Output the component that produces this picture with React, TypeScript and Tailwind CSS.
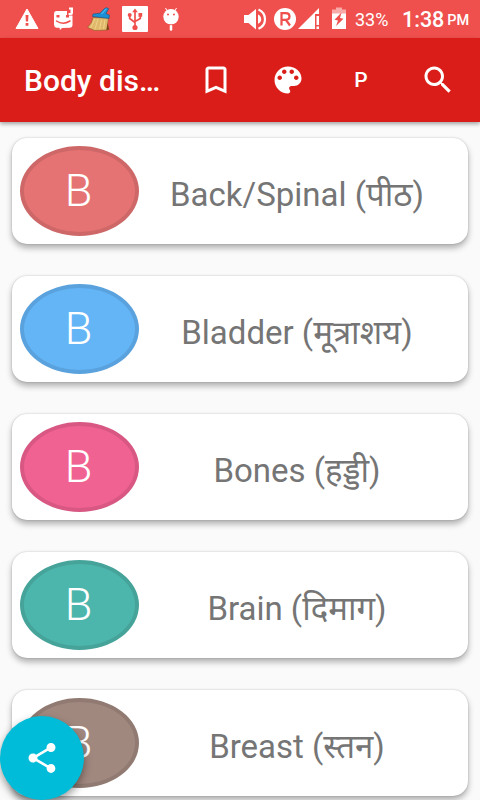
import type { ReactNode } from 'react';

const organs = [
  { name: 'Back/Spinal (पीठ)', fill: 'bg-[#e57373]', ring: 'border-[#ce6767]' },
  { name: 'Bladder (मूत्राशय)', fill: 'bg-[#64b5f6]', ring: 'border-[#5aa2dd]' },
  { name: 'Bones (हड्डी)', fill: 'bg-[#f06292]', ring: 'border-[#d85883]' },
  { name: 'Brain (दिमाग)', fill: 'bg-[#4db6ac]', ring: 'border-[#45a39a]' },
  { name: 'Breast (स्तन)', fill: 'bg-[#a1887f]', ring: 'border-[#907a72]' },
];

function Icon({ children }: { children: ReactNode }) {
  return (
    <svg viewBox="0 0 24 24" className="size-9 shrink-0" fill="currentColor">
      {children}
    </svg>
  );
}

function StatusBar() {
  return (
    <div className="flex h-[38px] items-center bg-[#ef504d] text-white">
      <svg width="240" height="38" viewBox="0 0 240 38" className="shrink-0">
        {/* warning */}
        <path fill="#fff" stroke="#fff" strokeWidth="1" strokeLinejoin="round" d="M27 9 38 28.500H16z" />
        <path fill="#ef504d" d="M25.500 15h3l-.4 6.500h-2.200zM25.600 23h2.800v2.700h-2.800z" />
        {/* chat face */}
        <path fill="#fff" d="M56.500 11H67v4.500h5.500V25.500q0 2-2.500 2.200L62 28l-2 2-.5-2.200-3-.1Q54 27 54 24.500V14q0-3 2.500-3z" />
        <path fill="#fff" d="M69 7.500h4v5.500q0 2-2 2h-2.500v-2h2v-3.500H69z" />
        <path fill="none" stroke="#ef504d" strokeWidth="1.500" strokeLinecap="round" d="M56.500 21q6.500 4.500 13.500 0" />
        <path fill="#ef504d" d="M56.500 15h3v2.500h-3zM66 15h3v2.500h-3z" />
        {/* broom */}
        <path fill="#dfb86c" stroke="#80571f" strokeWidth=".5" d="M93 17.500 108.500 18l-.7 4.500L107.500 30l-13 .5-7-3.200q4.500-3.500 5.500-9.800z" />
        <path fill="none" stroke="#f1d58c" strokeWidth=".9" d="m95 19-4.500 9M98 19l-3 10M101.500 19.500l-2 10M105 19.500l-1.500 9.500" />
        <path fill="#7b4419" d="m107.500 23 1.800 6.500-3 .8z" />
        <path fill="#1b8ed4" stroke="#17547f" strokeWidth=".6" d="m93 14 7-.8 4.500-4.700q2.200-1.500 4.200.2L106 13.500l3.500 1.700-.5 3.300-16.500-2z" />
        <path fill="none" stroke="#48b6ef" strokeWidth="1.200" d="m101.500 14 5-5.300" />
        {/* usb */}
        <rect x="122" y="6" width="26" height="26" rx="1" fill="#fff" />
        <path fill="none" stroke="#ef504d" strokeWidth="1.700" d="M135 11v16M129.700 15v3.500l5.300 4M140.300 15v3.500L135 21.500" />
        <path fill="#ef504d" d="m135 8.500 2.800 3.700h-5.600zM138.500 13h3.700v3.700h-3.700z" />
        <circle cx="129.700" cy="15" r="2" fill="#ef504d" />
        <circle cx="135" cy="27.500" r="2.600" fill="#ef504d" />
        {/* android head */}
        <path fill="none" stroke="#fff" strokeWidth="1" d="m165.500 8 2 3.500M176.500 8l-2 3.500" />
        <circle cx="171" cy="16.700" r="7.700" fill="#fff" />
        <path stroke="#fff" strokeWidth="2.500" strokeLinecap="round" d="M171 24v5.500" />
        <path stroke="#ef504d" strokeWidth=".9" d="M166 24.700h10" />
        <circle cx="168" cy="14.500" r="1" fill="#ef504d" />
        <circle cx="174" cy="14.500" r="1" fill="#ef504d" />
      </svg>
      <svg width="110" height="38" viewBox="240 0 110 38" className="shrink-0">
        {/* volume */}
        <path fill="#fff" d="M244 15h4.500l7.500-6v20.500l-7.500-6.500H244z" />
        <path fill="none" stroke="#fff" strokeWidth="2.200" d="M258.500 9.500q6.500 3 6.500 9.700t-6.500 9.600" />
        <path fill="#fff" d="M258 14.500q3.200 1.500 3.200 4.700t-3.200 4.600z" />
        {/* roaming and signal */}
        <circle cx="285" cy="19" r="11" fill="#fff" />
        <path fill="none" stroke="#ef504d" strokeWidth="2.200" d="M281.500 25.500V13.200h4.300q3.700 0 3.700 3.300t-3.700 3.300h-4.300M286 20l4 5.500" />
        <path fill="#fff" d="M298 29 319 8v6h-4v15z" />
        <path fill="#fff" d="M316.500 16h2.500v9h-2.500zM316.500 26.500h2.500V29h-2.500z" />
        {/* battery */}
        <path fill="#f8aaa8" d="M332 9.500h4V7.500h6v2h4V14h-14z" />
        <path fill="#fff" d="M332 13.500h14V29h-14z" />
        <path fill="#ef504d" d="m341.500 12.500-7 7.200 3.500.8-2 5.500 7.500-7.300-3.500-.7z" />
      </svg>
      <span className="ml-[5px] w-[47px] pt-0.5 text-[18px] leading-none">33%</span>
      <span className="pt-0.5 text-[21.500px] leading-none font-medium">1:38</span>
      <span className="ml-[3px] pt-[5px] text-[14.500px] leading-none font-medium">PM</span>
    </div>
  );
}

function AppBar() {
  return (
    <header className="relative flex h-[84px] items-center bg-[#da1d19] pl-6 text-white shadow-[0_2px_4px_rgba(0,0,0,0.35)]">
      <h1 className="w-[174px] text-[30px] font-medium">Body dis…</h1>
      <Icon>
        <path d="M17 3H7c-1.100 0-1.990.9-1.990 2L5 21l7-3 7 3V5c0-1.100-.9-2-2-2zm0 15-5-2.180L7 18V5h10v13z" />
      </Icon>
      <div className="ml-9 flex">
        <Icon>
          <path d="M12 3c-4.970 0-9 4.030-9 9s4.030 9 9 9c.83 0 1.500-.67 1.500-1.500 0-.39-.15-.74-.39-1.010-.23-.26-.38-.61-.38-.99 0-.83.67-1.500 1.500-1.500H16c2.760 0 5-2.240 5-5 0-4.420-4.030-8-9-8zm-5.500 9c-.83 0-1.500-.67-1.500-1.500S5.670 9 6.500 9 8 9.670 8 10.500 7.330 12 6.500 12zm3-4C8.670 8 8 7.330 8 6.500S8.670 5 9.500 5s1.500.67 1.500 1.500S10.330 8 9.500 8zm5 0c-.83 0-1.500-.67-1.500-1.500S13.670 5 14.500 5s1.500.67 1.500 1.500S15.330 8 14.500 8zm3 4c-.83 0-1.500-.67-1.500-1.500S16.670 9 17.500 9s1.500.67 1.500 1.500-.67 1.500-1.500 1.500z" />
        </Icon>
      </div>
      <span className="ml-9 w-[38px] pt-0.5 text-center text-[21px] font-medium">P</span>
      <div className="ml-10 flex">
        <Icon>
          <path d="M15.500 14h-.79l-.28-.27C15.410 12.590 16 11.110 16 9.500 16 5.910 13.090 3 9.500 3S3 5.910 3 9.500 5.910 16 9.500 16c1.610 0 3.090-.59 4.230-1.570l.27.28v.79l5 4.990L20.490 19l-4.990-5zm-6 0C7.010 14 5 11.990 5 9.500S7.010 5 9.500 5 14 7.010 14 9.500 11.990 14 9.500 14z" />
        </Icon>
      </div>
    </header>
  );
}

export default function App() {
  return (
    <div className="relative h-[800px] w-[480px] overflow-hidden bg-[#fafafa] font-[Roboto,'Noto_Sans',sans-serif]">
      <StatusBar />
      <AppBar />
      <main className="flex flex-col gap-8 px-3 pt-4">
        {organs.map((organ) => (
          <div
            key={organ.name}
            className="flex h-[106px] shrink-0 rounded-[15px] bg-white p-2 shadow-[0_4px_6px_rgba(0,0,0,0.3),0_0_2px_rgba(0,0,0,0.2)]"
          >
            <div
              className={`flex h-[90px] w-[119px] shrink-0 items-center justify-center rounded-[50%] border-4 pr-0.5 text-[45px] font-light text-white ${organ.fill} ${organ.ring}`}
            >
              B
            </div>
            <div className="flex flex-1 items-center justify-center pt-[7px] pr-[5px] text-[33px] leading-10 whitespace-nowrap text-[#757575]">
              {organ.name}
            </div>
          </div>
        ))}
      </main>
      <button
        aria-label="Share"
        className="absolute bottom-0 left-0 flex size-[84px] items-center justify-center rounded-full bg-[#00bcd8] text-white shadow-[0_4px_8px_rgba(0,0,0,0.4)]"
      >
        <Icon>
          <path d="M18 16.080c-.76 0-1.440.3-1.960.77L8.910 12.700c.05-.23.09-.46.09-.7s-.04-.47-.09-.7l7.050-4.110c.54.5 1.250.81 2.040.81 1.660 0 3-1.340 3-3s-1.340-3-3-3-3 1.340-3 3c0 .24.04.47.09.7L8.040 9.810C7.500 9.310 6.790 9 6 9c-1.660 0-3 1.340-3 3s1.340 3 3 3c.79 0 1.500-.31 2.040-.81l7.120 4.160c-.05.21-.08.43-.08.65 0 1.610 1.310 2.920 2.920 2.920s2.920-1.310 2.920-2.920-1.310-2.920-2.920-2.920z" />
        </Icon>
      </button>
    </div>
  );
}
